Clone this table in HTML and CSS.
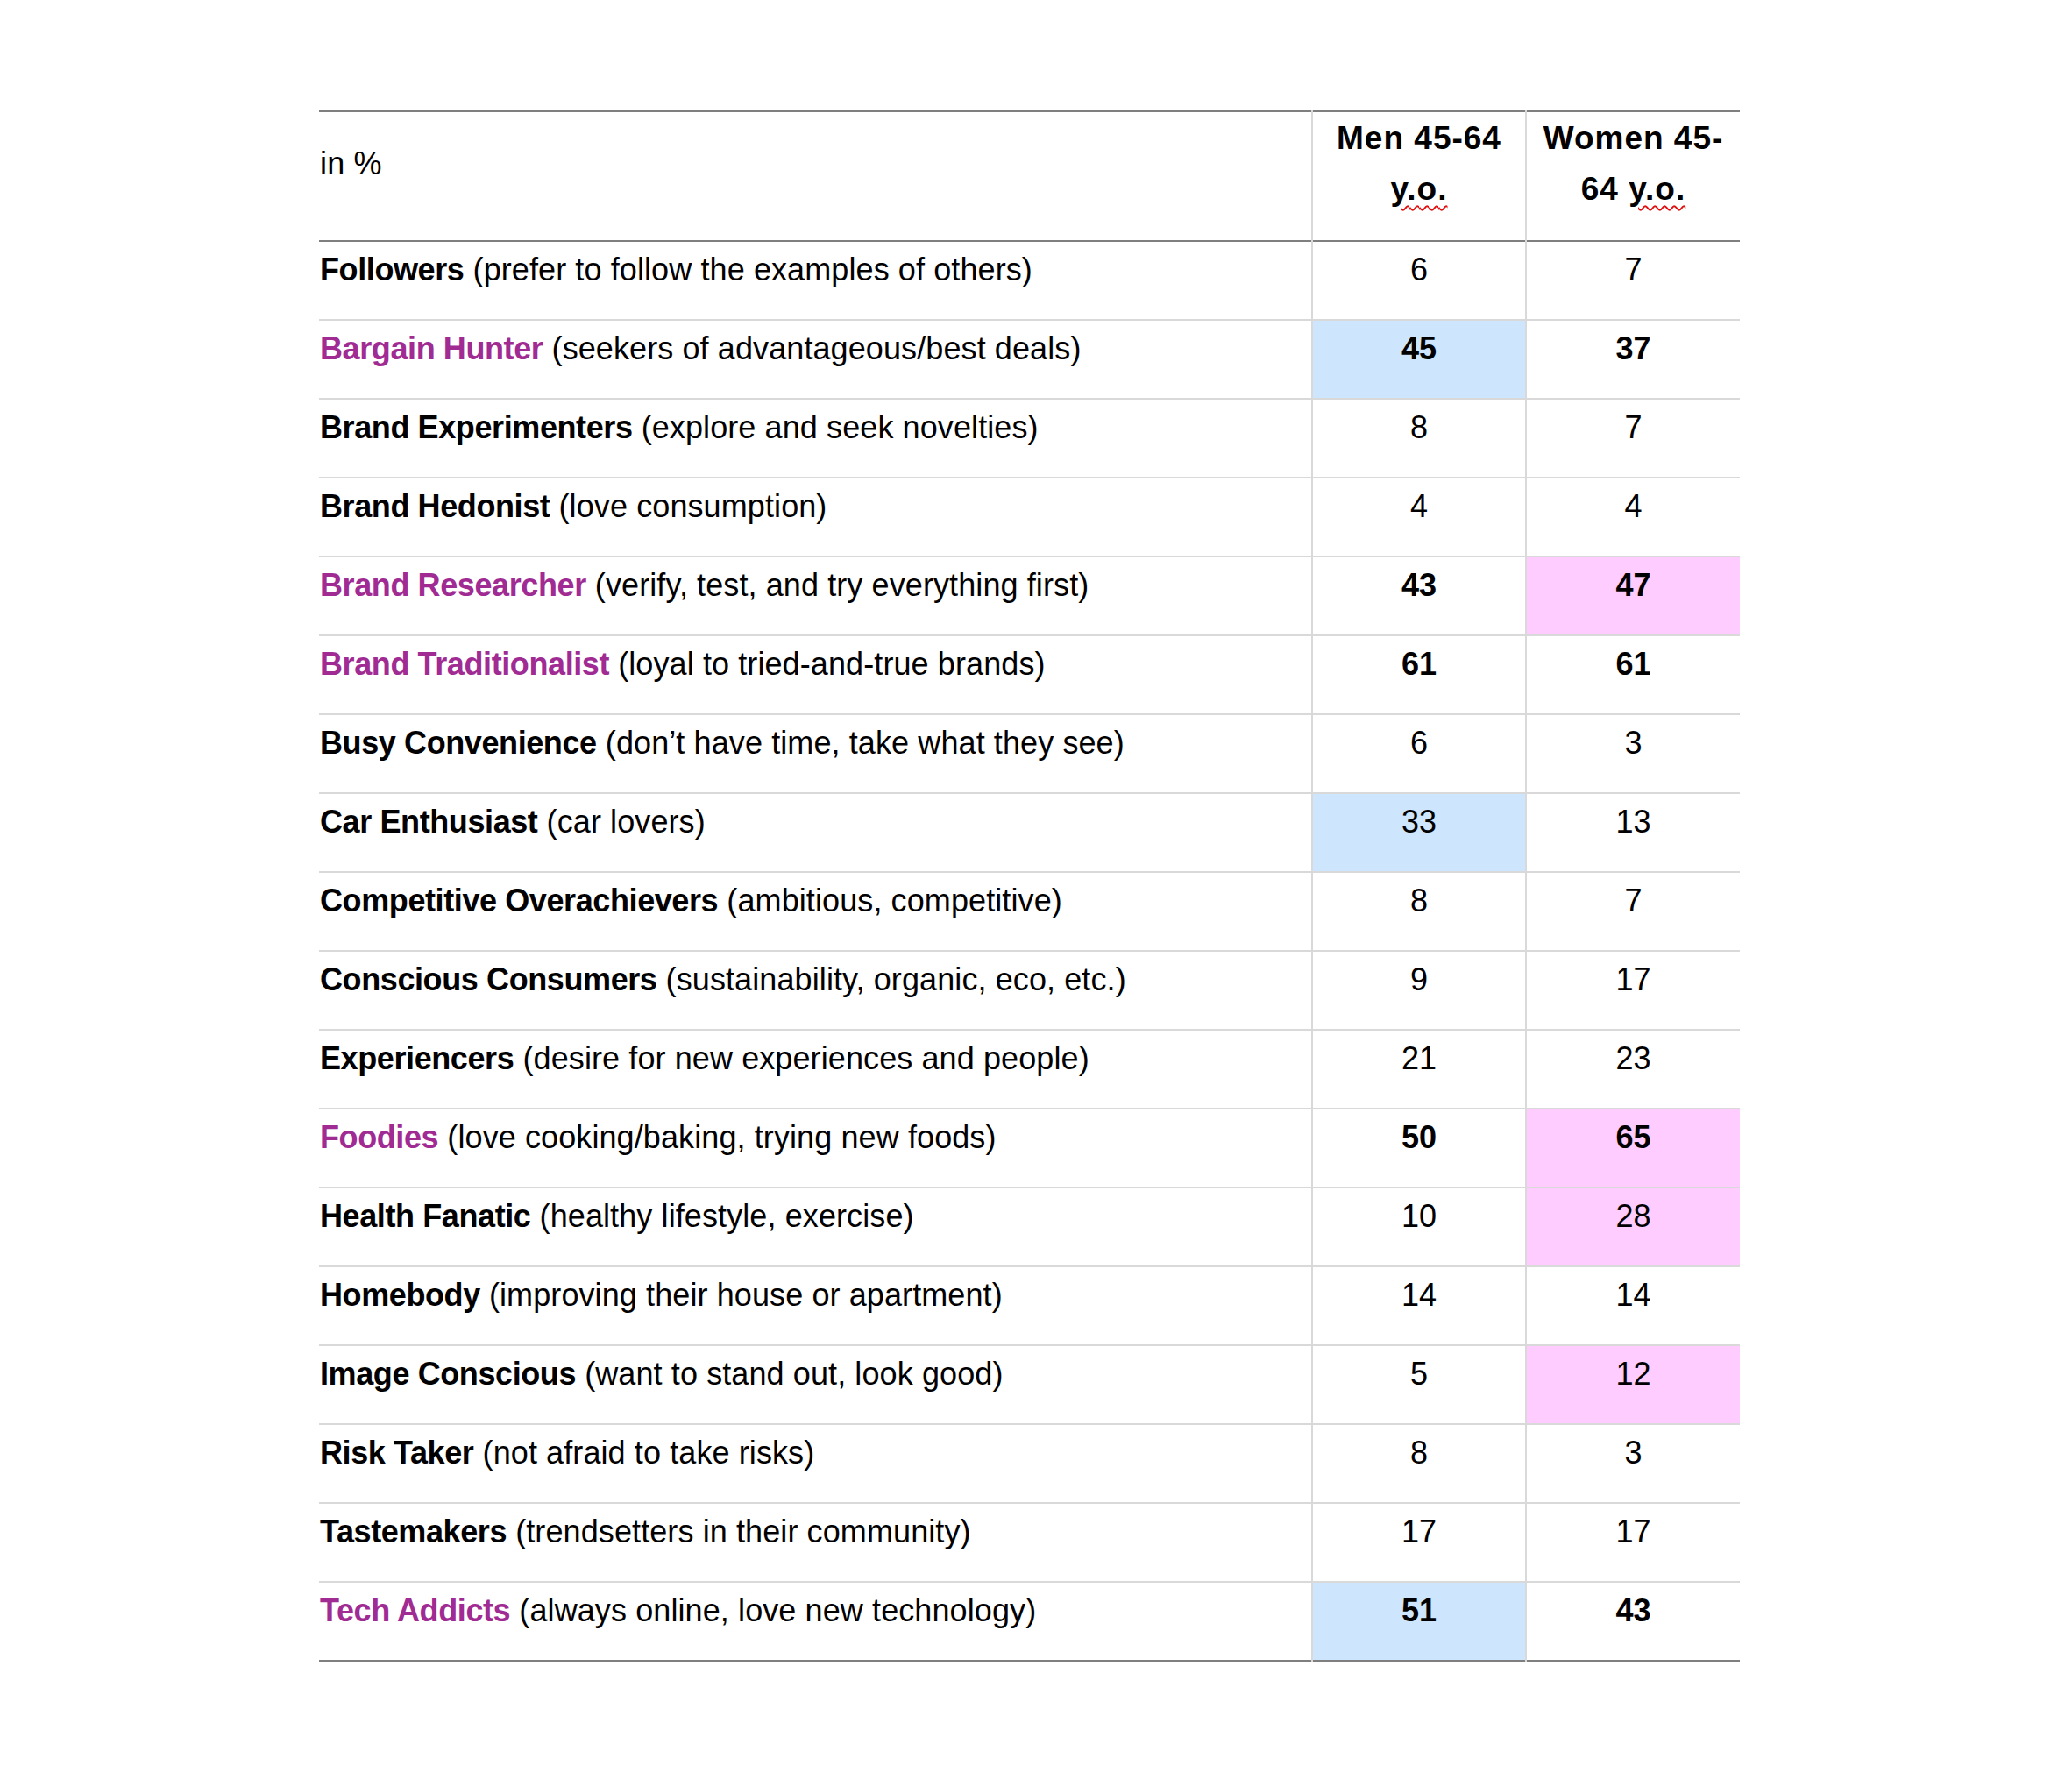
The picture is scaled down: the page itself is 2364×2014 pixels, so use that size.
FILE: index.html
```html
<!DOCTYPE html>
<html lang="en">
<head>
<meta charset="utf-8">
<title>Consumer types</title>
<link rel="stylesheet" href="styles.css">
</head>
<body>
<div class="page">
<table class="tbl">
  <colgroup>
    <col class="c-label">
    <col class="c-num">
    <col class="c-num">
  </colgroup>
  <thead>
    <tr>
      <th class="lbl">in %</th>
      <th class="num">Men 45-64<br><span class="sp">y.o.</span></th>
      <th class="num">Women 45-<br>64 <span class="sp">y.o.</span></th>
    </tr>
  </thead>
  <tbody>
    <tr><td class="lbl"><b>Followers</b> (prefer to follow the examples of others)</td><td class="num">6</td><td class="num">7</td></tr>
    <tr><td class="lbl"><b class="hl">Bargain Hunter</b> (seekers of advantageous/best deals)</td><td class="num b blue">45</td><td class="num b">37</td></tr>
    <tr><td class="lbl"><b>Brand Experimenters</b> (explore and seek novelties)</td><td class="num">8</td><td class="num">7</td></tr>
    <tr><td class="lbl"><b>Brand Hedonist</b> (love consumption)</td><td class="num">4</td><td class="num">4</td></tr>
    <tr><td class="lbl"><b class="hl">Brand Researcher</b> (verify, test, and try everything first)</td><td class="num b">43</td><td class="num b pink">47</td></tr>
    <tr><td class="lbl"><b class="hl">Brand Traditionalist</b> (loyal to tried-and-true brands)</td><td class="num b">61</td><td class="num b">61</td></tr>
    <tr><td class="lbl"><b>Busy Convenience</b> (don’t have time, take what they see)</td><td class="num">6</td><td class="num">3</td></tr>
    <tr><td class="lbl"><b>Car Enthusiast</b> (car lovers)</td><td class="num blue">33</td><td class="num">13</td></tr>
    <tr><td class="lbl"><b>Competitive Overachievers</b> (ambitious, competitive)</td><td class="num">8</td><td class="num">7</td></tr>
    <tr><td class="lbl"><b>Conscious Consumers</b> (sustainability, organic, eco, etc.)</td><td class="num">9</td><td class="num">17</td></tr>
    <tr><td class="lbl"><b>Experiencers</b> (desire for new experiences and people)</td><td class="num">21</td><td class="num">23</td></tr>
    <tr><td class="lbl"><b class="hl">Foodies</b> (love cooking/baking, trying new foods)</td><td class="num b">50</td><td class="num b pink">65</td></tr>
    <tr><td class="lbl"><b>Health Fanatic</b> (healthy lifestyle, exercise)</td><td class="num">10</td><td class="num pink">28</td></tr>
    <tr><td class="lbl"><b>Homebody</b> (improving their house or apartment)</td><td class="num">14</td><td class="num">14</td></tr>
    <tr><td class="lbl"><b>Image Conscious</b> (want to stand out, look good)</td><td class="num">5</td><td class="num pink">12</td></tr>
    <tr><td class="lbl"><b>Risk Taker</b> (not afraid to take risks)</td><td class="num">8</td><td class="num">3</td></tr>
    <tr><td class="lbl"><b>Tastemakers</b> (trendsetters in their community)</td><td class="num">17</td><td class="num">17</td></tr>
    <tr><td class="lbl"><b class="hl">Tech Addicts</b> (always online, love new technology)</td><td class="num b blue">51</td><td class="num b">43</td></tr>
  </tbody>
</table>
</div>
</body>
</html>
```

FILE: styles.css
```css
html, body {
  margin: 0;
  padding: 0;
  background: #ffffff;
}

body {
  font-family: "Liberation Sans", Arial, sans-serif;
  color: #000000;
}

.page {
  padding: 126px 0 0 364px;
}

.tbl {
  border-collapse: collapse;
  table-layout: fixed;
  width: 1621px;
  border-top: 2px solid #7f7f7f;
  border-bottom: 2px solid #7f7f7f;
}

.c-label { width: 1133px; }
.c-num { width: 244px; }

.tbl th {
  font-size: 37px;
  line-height: 58px;
  font-weight: bold;
  letter-spacing: 1px;
  padding: 1px 1px 29px;
  vertical-align: top;
}

.tbl th.lbl {
  font-size: 36px;
  font-weight: normal;
  letter-spacing: 0.2px;
  text-align: left;
  vertical-align: middle;
}

.tbl thead tr {
  border-bottom: 2px solid #7f7f7f;
}

.tbl td {
  font-size: 36px;
  line-height: 60px;
  padding: 2px 1px 26px;
  vertical-align: top;
}

.tbl tbody tr {
  border-bottom: 2px solid #d9d9d9;
}

.tbl tbody tr:last-child {
  border-bottom: 2px solid #7f7f7f;
}

.tbl .num {
  text-align: center;
  border-left: 2px solid #d9d9d9;
}

.tbl td.lbl {
  text-align: left;
  white-space: nowrap;
  letter-spacing: 0.1px;
}

.tbl td.lbl b {
  letter-spacing: -0.4px;
}

.tbl .b { font-weight: bold; }

.hl { color: #a02b93; }

.blue { background: #cde6fe; }
.pink { background: #ffccff; }

.sp {
  text-decoration-line: underline;
  text-decoration-style: wavy;
  text-decoration-color: #e01010;
  text-decoration-thickness: 2px;
  text-underline-offset: 6px;
}
```
